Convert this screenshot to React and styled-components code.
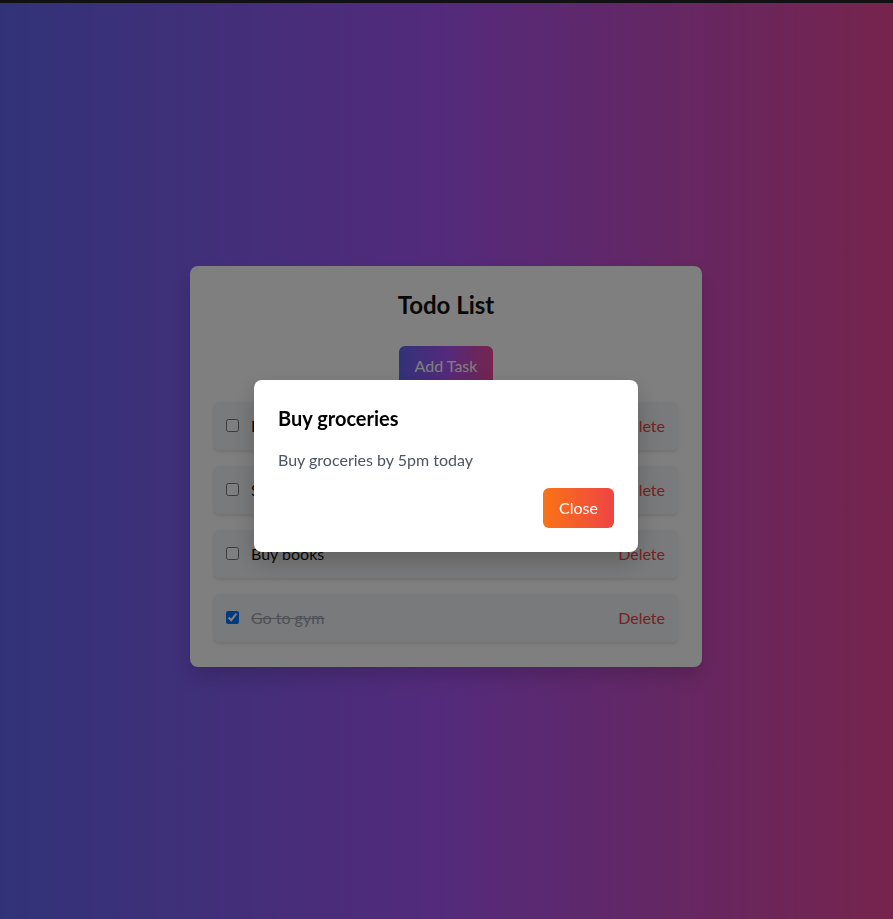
import styled, { createGlobalStyle } from 'styled-components';

const GlobalStyle = createGlobalStyle`
  html, body {
    margin: 0;
    padding: 0;
  }
  body {
    font-family: "Lato", "Noto Sans", sans-serif;
    background: #202124;
  }
  * {
    box-sizing: border-box;
  }
`;

const TopBar = styled.div`
  height: 3px;
  background: #222226;
`;

const Page = styled.main`
  min-height: 916px;
  padding: 10px 1px 0 0;
  background: linear-gradient(to right, #6366f1, #a855f7, #ec4899);
  display: flex;
  align-items: center;
  justify-content: center;
`;

const Card = styled.section`
  width: 512px;
  background: #ffffff;
  border-radius: 8px;
  padding: 24px 24px 25px;
  box-shadow: 0 10px 20px rgba(0, 0, 0, 0.15);
  display: flex;
  flex-direction: column;
  align-items: center;
`;

const Title = styled.h1`
  margin: 0 0 26px;
  font-size: 24px;
  line-height: 30px;
  font-weight: 700;
  color: #111111;
`;

const AddButton = styled.button`
  height: 40px;
  padding: 0 16px;
  margin-bottom: 16px;
  border: none;
  border-radius: 6px;
  font-family: inherit;
  font-size: 16px;
  color: #ffffff;
  background: linear-gradient(to right, #6366f1, #a855f7, #ec4899);
  cursor: pointer;
`;

const List = styled.ul`
  list-style: none;
  margin: 0;
  padding: 0;
  width: 100%;
  display: flex;
  flex-direction: column;
  gap: 16px;
`;

const Row = styled.li`
  height: 48px;
  padding: 0 13px 0 12px;
  background: #f3f4f6;
  border-radius: 6px;
  box-shadow: 0 2px 4px rgba(0, 0, 0, 0.12);
  display: flex;
  align-items: center;
`;

const Check = styled.input`
  width: 13px;
  height: 13px;
  margin: 0 12px 0 0;
`;

const TaskText = styled.span`
  flex: 1;
  font-size: 16px;
  line-height: 24px;
  color: ${p => (p.$done ? '#9ca3af' : '#111111')};
  text-decoration: ${p => (p.$done ? 'line-through' : 'none')};
`;

const DeleteButton = styled.button`
  border: none;
  background: none;
  padding: 0;
  font-family: inherit;
  font-size: 16px;
  color: #ef4444;
  cursor: pointer;
`;

const Overlay = styled.div`
  position: fixed;
  inset: 0;
  padding: 12px 1px 0 0;
  background: rgba(0, 0, 0, 0.5);
  display: flex;
  align-items: center;
  justify-content: center;
`;

const Modal = styled.div`
  width: 384px;
  background: #ffffff;
  border-radius: 8px;
  padding: 24px;
  box-shadow: 0 10px 25px rgba(0, 0, 0, 0.2);
  display: flex;
  flex-direction: column;
`;

const ModalTitle = styled.h2`
  margin: 0 0 16px;
  font-size: 20px;
  line-height: 28px;
  font-weight: 700;
  color: #000000;
`;

const ModalText = styled.p`
  margin: 0 0 16px;
  font-size: 16px;
  line-height: 24px;
  color: #4b5563;
`;

const CloseButton = styled.button`
  align-self: flex-end;
  height: 40px;
  padding: 0 16px;
  border: none;
  border-radius: 6px;
  font-family: inherit;
  font-size: 16px;
  color: #ffffff;
  background: linear-gradient(to right, #f97316, #ef4444);
  cursor: pointer;
`;

const todos = [
  { id: 1, text: 'Buy groceries', done: false },
  { id: 2, text: 'Study for exam', done: false },
  { id: 3, text: 'Buy books', done: false },
  { id: 4, text: 'Go to gym', done: true },
];

export default function App() {
  return (
    <>
      <GlobalStyle />
      <TopBar />
      <Page>
        <Card>
          <Title>Todo List</Title>
          <AddButton>Add Task</AddButton>
          <List>
            {todos.map(t => (
              <Row key={t.id}>
                <Check type="checkbox" defaultChecked={t.done} />
                <TaskText $done={t.done}>{t.text}</TaskText>
                <DeleteButton>Delete</DeleteButton>
              </Row>
            ))}
          </List>
        </Card>
      </Page>
      <Overlay>
        <Modal>
          <ModalTitle>Buy groceries</ModalTitle>
          <ModalText>Buy groceries by 5pm today</ModalText>
          <CloseButton>Close</CloseButton>
        </Modal>
      </Overlay>
    </>
  );
}
